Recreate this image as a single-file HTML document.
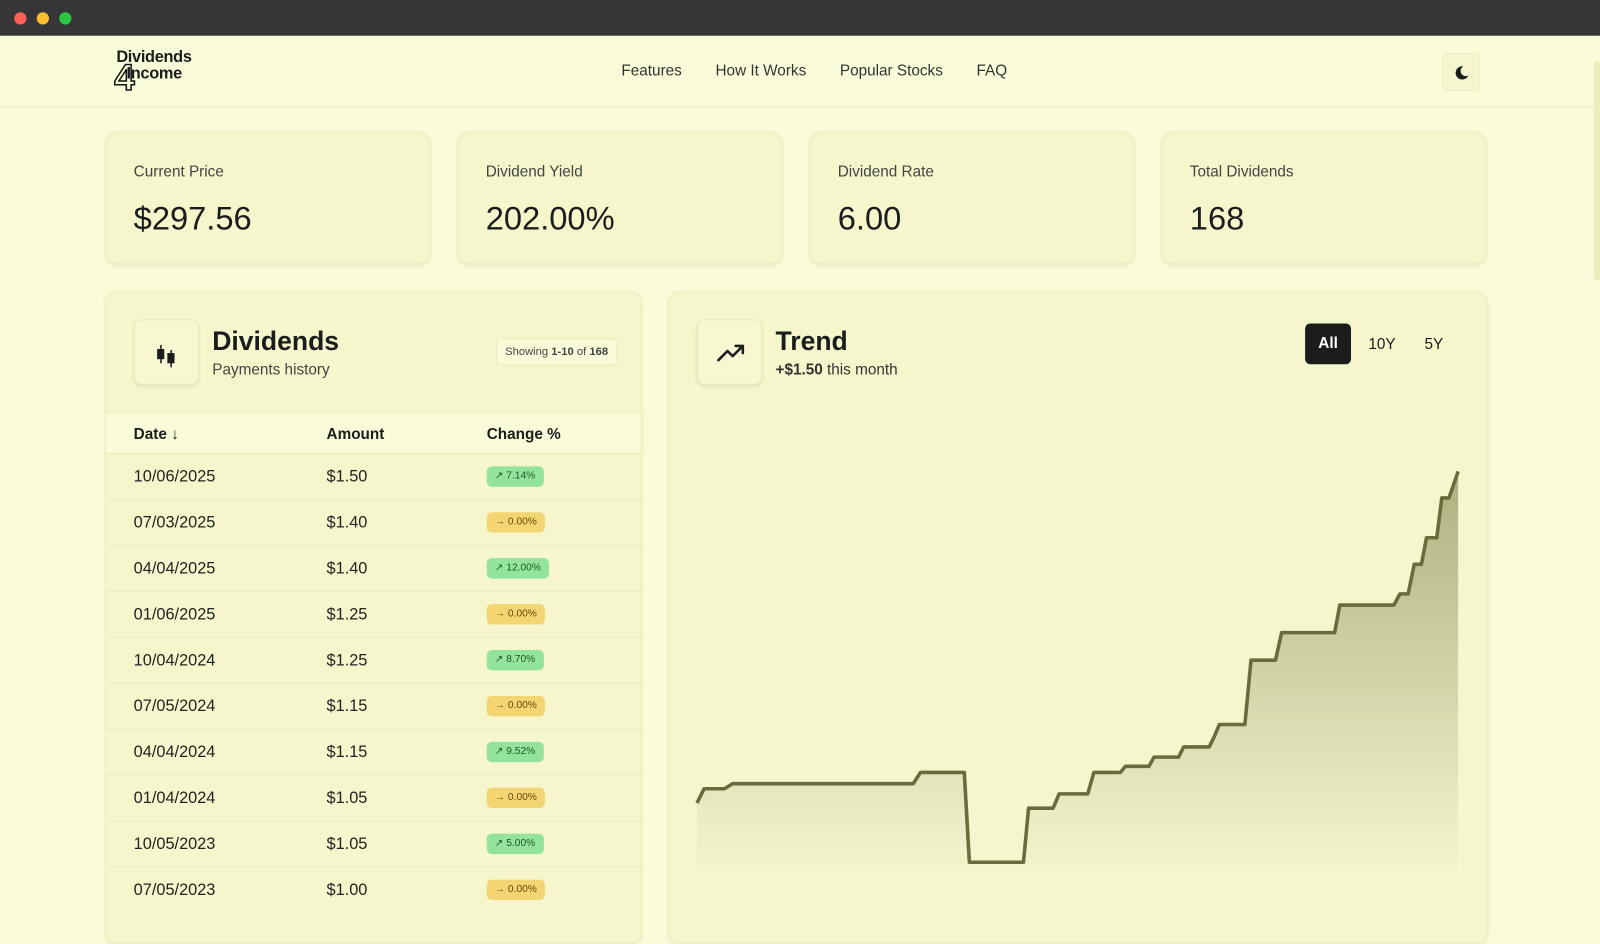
<!DOCTYPE html>
<html><head><meta charset="utf-8"><style>
*{box-sizing:border-box;margin:0;padding:0}
body{width:1600px;height:899px;overflow:hidden;background:#fafbd9;font-family:"Liberation Sans",sans-serif;color:#1c1c1c;position:relative}
#w{position:absolute;left:0;top:0;width:1568px;height:881px;transform:scale(1.0204);transform-origin:0 0}
.bar{height:35px;background:#363638;position:relative}
.dot{position:absolute;top:12px;width:12px;height:12px;border-radius:50%}
.nav{height:71px;border-bottom:2px solid #eff0c6;position:relative}
.logo{position:absolute;left:114px;top:14px;font-weight:bold;font-size:16px;line-height:15px;letter-spacing:-.3px}
.links{position:absolute;left:609px;top:26px;font-size:15px;color:#333}
.links span{margin-right:33px}
.moon{position:absolute;left:1413px;top:17px;width:37px;height:37px;border:1px solid #eceebf;border-radius:5px;background:#f5f6cf}
.card{position:absolute;background:#f5f6cc;border:1px solid #eceebd;border-radius:12px;box-shadow:0 2px 4px rgba(0,0,0,.07)}
.stat .l{position:absolute;left:27px;top:30px;font-size:15px;color:#444}
.stat .v{position:absolute;left:27px;top:66px;font-size:32px;color:#1c1c1c}
.ib{position:absolute;width:64px;height:64px;border:1px solid #e8eab8;border-radius:8px;background:#f7f8d2;box-shadow:0 2px 3px rgba(0,0,0,.08)}
.row{position:absolute;left:0;width:525px;height:45px;border-top:1px solid #ebecbf;font-size:16px;color:#222}
.row span{position:absolute;top:14px}
.badge{position:absolute;top:12px;left:373px;height:20px;border-radius:5px;font-size:10px;padding:4px 8px 0 8px}
.g{background:#93e39a;color:#1b5a25}.y{background:#f3d574;color:#6a4a08}
</style></head><body><div id="w">
<div class="bar"><div class="dot" style="left:14px;background:#fe5f57"></div><div class="dot" style="left:36px;background:#febc2e"></div><div class="dot" style="left:58px;background:#28c840"></div></div>
<div class="nav">
<div class="logo">Dividends<br><span style="position:absolute;left:-2px;top:9px;font-size:36px;line-height:36px;font-weight:bold;-webkit-text-stroke:1.5px #111;color:#fafbd9">4</span><span style="position:relative;left:10px;top:1px;z-index:1">Income</span></div>
<div class="links"><span>Features</span><span>How It Works</span><span>Popular Stocks</span><span>FAQ</span></div>
<div class="moon"><svg width="37" height="37" viewBox="0 0 37 37"><path d="M20 12a6.5 6.5 0 1 0 5 9 5 5 0 0 1-5-9z" fill="#1c1c1c"/></svg></div>
</div>
<div style="position:absolute;left:1562px;top:60px;width:6px;height:215px;background:#eceebd;border-radius:3px"></div>

<div class="card stat" style="left:103px;top:129px;width:319px;height:130px"><div class="l">Current Price</div><div class="v">$297.56</div></div>
<div class="card stat" style="left:448px;top:129px;width:319px;height:130px"><div class="l">Dividend Yield</div><div class="v">202.00%</div></div>
<div class="card stat" style="left:793px;top:129px;width:319px;height:130px"><div class="l">Dividend Rate</div><div class="v">6.00</div></div>
<div class="card stat" style="left:1138px;top:129px;width:319px;height:130px"><div class="l">Total Dividends</div><div class="v">168</div></div>

<div class="card" style="left:103px;top:285px;width:526px;height:640px;overflow:hidden">
<div class="ib" style="left:27px;top:27px"><svg width="64" height="64"><rect x="22" y="28" width="7" height="10" fill="#1c1c1c"/><rect x="25" y="24" width="1.5" height="18" fill="#1c1c1c"/><rect x="32" y="32" width="7" height="10" fill="#1c1c1c"/><rect x="35" y="29" width="1.5" height="17" fill="#1c1c1c"/></svg></div>
<div style="position:absolute;left:104px;top:33px;font-size:26px;font-weight:bold">Dividends</div>
<div style="position:absolute;left:104px;top:68px;font-size:15px;color:#444">Payments history</div>
<div style="position:absolute;left:382px;top:46px;height:26px;border:1px solid #ebecbf;border-radius:4px;background:#fafbd9;font-size:11px;color:#444;padding:6px 8px">Showing <b>1-10</b> of <b>168</b></div>
<div style="position:absolute;left:0;top:118px;width:526px;height:40px;background:#fafbd9;border-top:1px solid #ebecbf;font-size:15px;font-weight:bold">
<span style="position:absolute;left:27px;top:12px">Date ↓</span><span style="position:absolute;left:216px;top:12px">Amount</span><span style="position:absolute;left:373px;top:12px">Change %</span></div>
<div class="row" style="top:158px"><span style="left:27px">10/06/2025</span><span style="left:216px">$1.50</span><div class="badge g">↗ 7.14%</div></div>
<div class="row" style="top:203px"><span style="left:27px">07/03/2025</span><span style="left:216px">$1.40</span><div class="badge y">→ 0.00%</div></div>
<div class="row" style="top:248px"><span style="left:27px">04/04/2025</span><span style="left:216px">$1.40</span><div class="badge g">↗ 12.00%</div></div>
<div class="row" style="top:293px"><span style="left:27px">01/06/2025</span><span style="left:216px">$1.25</span><div class="badge y">→ 0.00%</div></div>
<div class="row" style="top:338px"><span style="left:27px">10/04/2024</span><span style="left:216px">$1.25</span><div class="badge g">↗ 8.70%</div></div>
<div class="row" style="top:383px"><span style="left:27px">07/05/2024</span><span style="left:216px">$1.15</span><div class="badge y">→ 0.00%</div></div>
<div class="row" style="top:428px"><span style="left:27px">04/04/2024</span><span style="left:216px">$1.15</span><div class="badge g">↗ 9.52%</div></div>
<div class="row" style="top:473px"><span style="left:27px">01/04/2024</span><span style="left:216px">$1.05</span><div class="badge y">→ 0.00%</div></div>
<div class="row" style="top:518px"><span style="left:27px">10/05/2023</span><span style="left:216px">$1.05</span><div class="badge g">↗ 5.00%</div></div>
<div class="row" style="top:563px"><span style="left:27px">07/05/2023</span><span style="left:216px">$1.00</span><div class="badge y">→ 0.00%</div></div>
</div>

<div class="card" style="left:655px;top:285px;width:803px;height:640px">
<div class="ib" style="left:27px;top:27px"><svg width="64" height="64"><path d="M20 39l9-9 5 5 10-10M37 25h7v7" fill="none" stroke="#1c1c1c" stroke-width="2.5" stroke-linecap="round" stroke-linejoin="round"/></svg></div>
<div style="position:absolute;left:104px;top:33px;font-size:26px;font-weight:bold">Trend</div>
<div style="position:absolute;left:104px;top:68px;font-size:15px;color:#333"><b>+$1.50</b> this month</div>
<div style="position:absolute;left:623px;top:31px;width:45px;height:40px;background:#1c1c1c;color:#fff;border-radius:5px;font-size:15px;font-weight:bold;text-align:center;line-height:40px">All</div>
<div style="position:absolute;left:685px;top:43px;font-size:15px">10Y</div>
<div style="position:absolute;left:740px;top:43px;font-size:15px">5Y</div>
</div>
<svg style="position:absolute;left:0;top:0" width="1568" height="881">
<defs><linearGradient id="gr" x1="0" y1="0" x2="0" y2="1"><stop offset="0" stop-color="#8a8a5a" stop-opacity=".65"/><stop offset="1" stop-color="#8a8a5a" stop-opacity="0"/></linearGradient></defs>
<path d="M683 787L690 773L710 773L718 768L895 768L902 757L945 757L950 845L1003 845L1008 792L1032 792L1038 778L1066 778L1072 757L1098 757L1103 751L1126 751L1131 742L1155 742L1160 732L1185 732L1190 722L1195 710L1220 710L1226 647L1250 647L1256 620L1308 620L1313 593L1366 593L1372 582L1380 582L1386 553L1393 553L1398 527L1408 527L1413 488L1420 488L1429 462L1429 860L683 860Z" fill="url(#gr)"/>
<path d="M683 787L690 773L710 773L718 768L895 768L902 757L945 757L950 845L1003 845L1008 792L1032 792L1038 778L1066 778L1072 757L1098 757L1103 751L1126 751L1131 742L1155 742L1160 732L1185 732L1190 722L1195 710L1220 710L1226 647L1250 647L1256 620L1308 620L1313 593L1366 593L1372 582L1380 582L1386 553L1393 553L1398 527L1408 527L1413 488L1420 488L1429 462" fill="none" stroke="#6b6b3c" stroke-width="3.5" stroke-linejoin="round"/>
</svg>
</div></body></html>
